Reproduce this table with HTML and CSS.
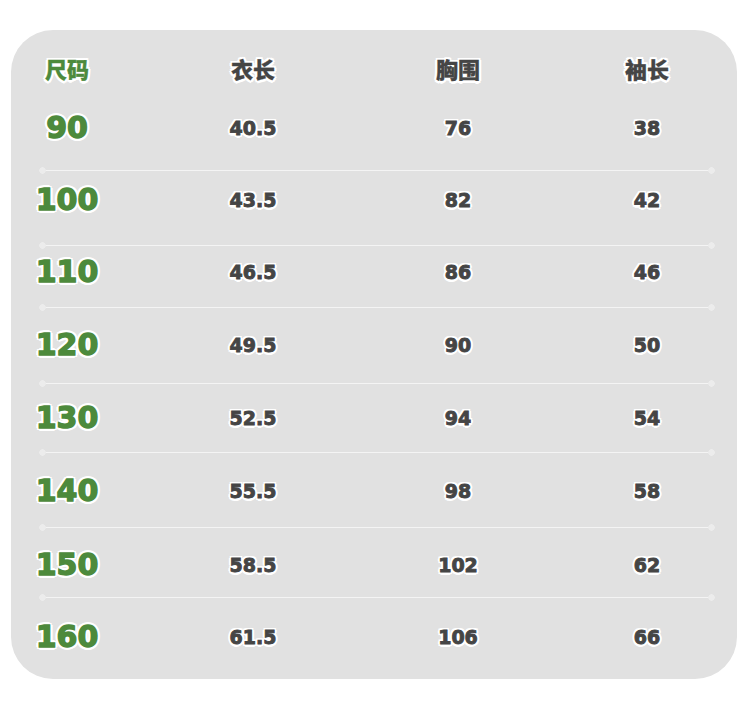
FILE: index.html
```html
<!DOCTYPE html>
<html lang="zh">
<head>
<meta charset="utf-8">
<link rel="stylesheet" href="styles.css">
</head>
<body>
<div class="panel">
  <div class="row head">
    <span class="c size">尺码</span><span class="c">衣长</span><span class="c">胸围</span><span class="c">袖长</span>
  </div>
  <div class="row r1"><span class="c size num">90</span><span class="c">40.5</span><span class="c">76</span><span class="c">38</span></div>
  <div class="row r2"><span class="c size num">100</span><span class="c">43.5</span><span class="c">82</span><span class="c">42</span></div>
  <div class="row r3"><span class="c size num">110</span><span class="c">46.5</span><span class="c">86</span><span class="c">46</span></div>
  <div class="row r4"><span class="c size num">120</span><span class="c">49.5</span><span class="c">90</span><span class="c">50</span></div>
  <div class="row r5"><span class="c size num">130</span><span class="c">52.5</span><span class="c">94</span><span class="c">54</span></div>
  <div class="row r6"><span class="c size num">140</span><span class="c">55.5</span><span class="c">98</span><span class="c">58</span></div>
  <div class="row r7"><span class="c size num">150</span><span class="c">58.5</span><span class="c">102</span><span class="c">62</span></div>
  <div class="row r8"><span class="c size num">160</span><span class="c">61.5</span><span class="c">106</span><span class="c">66</span></div>
</div>
</body>
</html>
```
FILE: styles.css
```css
html, body {
  margin: 0;
  padding: 0;
  background: #ffffff;
}
body {
  width: 750px;
  height: 701px;
  padding-top: 30px;
  box-sizing: border-box;
}
.panel {
  margin-left: 11px;
  width: 726px;
  height: 649px;
  background: #e1e1e1;
  border-radius: 42px;
  box-sizing: border-box;
  display: flex;
  flex-direction: column;
}
.row {
  display: grid;
  grid-template-columns: 112px 260px 150px 1fr;
  box-sizing: border-box;
  line-height: 30px;
  position: relative;
}
.c {
  text-align: center;
  font-family: "DejaVu Sans", "Noto Sans CJK SC", sans-serif;
  font-weight: bold;
  font-size: 19px;
  color: #454545;
  -webkit-text-stroke: 0.9px #454545;
  text-shadow: 0 0 1.5px #fff, 2.5px 0 0 #fff, -2.5px 0 0 #fff, 0 2.5px 0 #fff, 0 -2.5px 0 #fff,
    1.8px 1.8px 0 #fff, -1.8px -1.8px 0 #fff, 1.8px -1.8px 0 #fff, -1.8px 1.8px 0 #fff;
}
.row > .c:nth-child(4) { padding-left: 24px; }
.head .c {
  font-family: "Noto Sans CJK SC", sans-serif;
  font-weight: 900;
  font-size: 22px;
  -webkit-text-stroke: 0.3px #454545;
}
.size { color: #4d8a3c; }
.c.size { -webkit-text-stroke-color: #4d8a3c; }
.num {
  font-size: 30px;
  -webkit-text-stroke-width: 1.4px;
  text-shadow: 0 0 1.5px #fff, 3px 0 0 #fff, -3px 0 0 #fff, 0 3px 0 #fff, 0 -3px 0 #fff,
    2.1px 2.1px 0 #fff, -2.1px -2.1px 0 #fff, 2.1px -2.1px 0 #fff, -2.1px 2.1px 0 #fff;
}

.head { height: 70px; padding-top: 23px; }
.r1 { height: 71px; padding-top: 13px; }
.r2 { height: 75px; padding-top: 14px; }
.r3 { height: 62px; padding-top: 11px; }
.r4 { height: 76px; padding-top: 22px; }
.r5 { height: 69px; padding-top: 19px; }
.r6 { height: 75px; padding-top: 23px; }
.r7 { height: 70px; padding-top: 22px; }
.r8 { padding-top: 24px; }

.r1, .r2, .r3, .r4, .r5, .r6, .r7 {
  background-image: linear-gradient(#f4f4f4, #f4f4f4);
  background-repeat: no-repeat;
  background-size: 668px 1px;
  background-position: 32px 100%;
}
.r1::after, .r2::after, .r3::after, .r4::after, .r5::after, .r6::after, .r7::after {
  content: "";
  position: absolute;
  left: 28px;
  right: 22px;
  bottom: -3px;
  height: 7px;
  background:
    radial-gradient(circle, #ececec 3px, transparent 3.5px) left center / 7px 7px no-repeat,
    radial-gradient(circle, #ececec 3px, transparent 3.5px) right center / 7px 7px no-repeat;
}
```
